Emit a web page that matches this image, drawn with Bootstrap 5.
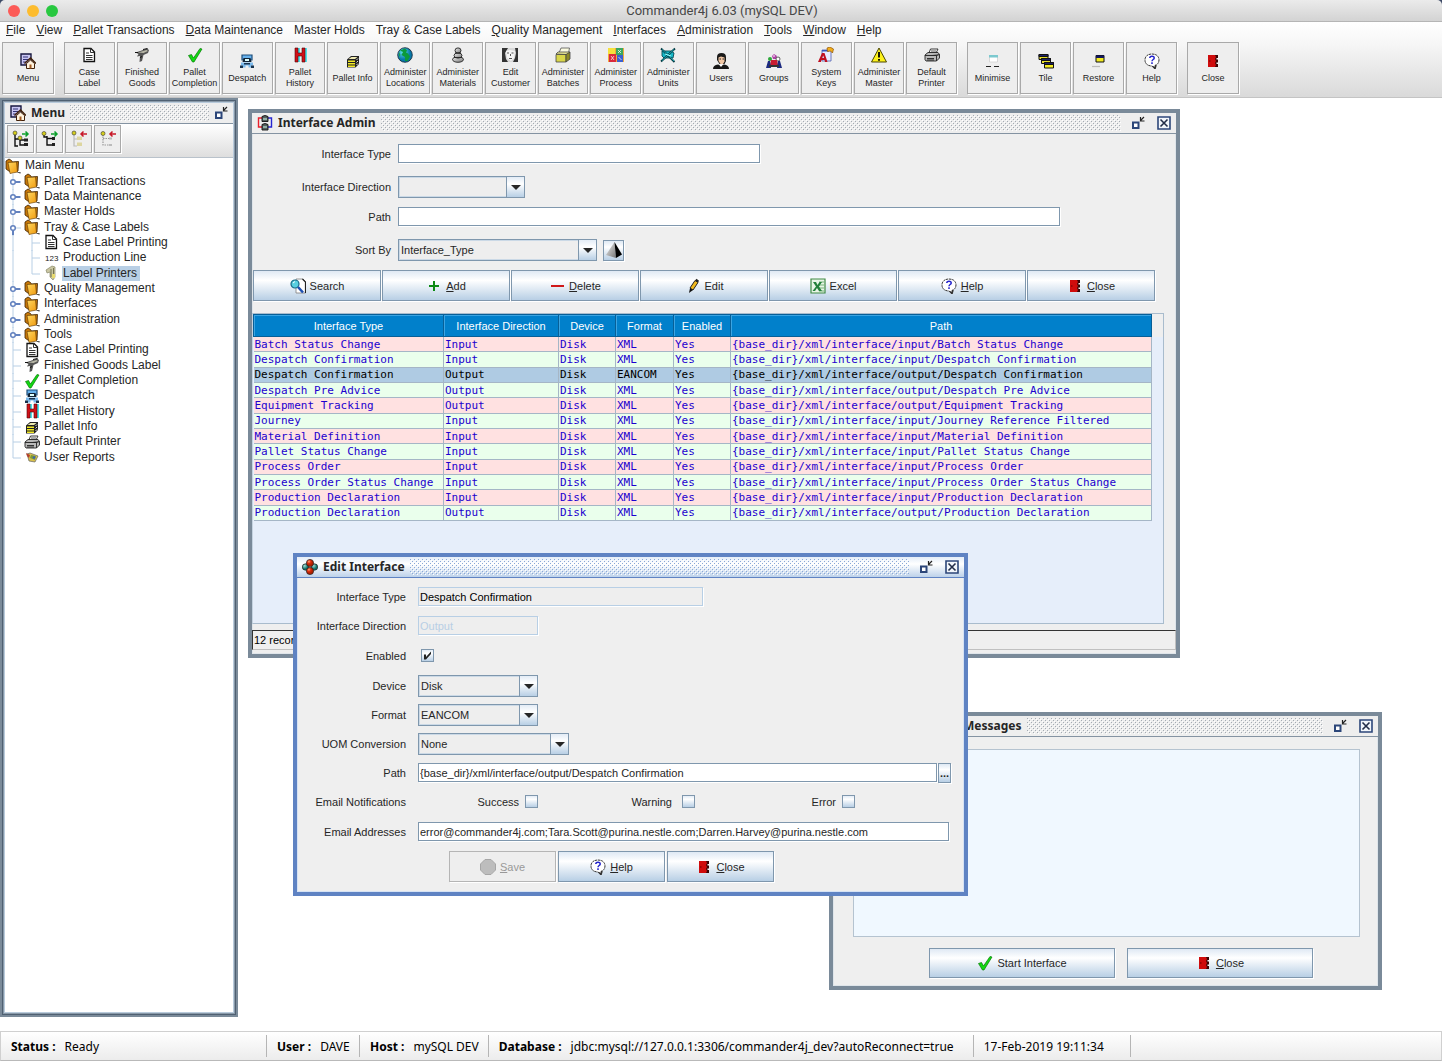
<!DOCTYPE html>
<html lang="en">
<head>
<meta charset="utf-8">
<meta name="viewport" content="width=device-width, initial-scale=1">
<title>Commander4j 6.03 (mySQL DEV)</title>
<link href="https://cdn.jsdelivr.net/npm/bootstrap@5.3.0/dist/css/bootstrap.min.css" rel="stylesheet">
<script src="https://cdn.jsdelivr.net/npm/bootstrap@5.3.0/dist/js/bootstrap.bundle.min.js"></script>
<style>
:root{--ui:"Liberation Sans",Arial,sans-serif;--lucida:"Noto Sans","Open Sans",sans-serif;--frame:#7a8a99;--active:#5f83c3;--steel:#7f97ad}
body{font-family:var(--ui);font-size:11px;line-height:14px;color:#262626;background:#fff}
svg{flex:none;display:block}
.ic{width:16px;height:16px}
/* application chrome */
.app-title{height:22px;background:linear-gradient(#ebebeb,#d3d3d3);border-bottom:1px solid #b5b5b5;font:13px/22px Roboto,sans-serif;color:#474747;padding:0 8px;border-radius:5px 5px 0 0}
.lights{gap:7px}
.light{width:12px;height:12px;border-radius:50%}
.l-red{background:#fc5b57}.l-amber{background:#fdbc2e}.l-green{background:#28c840}
.app-top{background:#3d4a66}
.app-head{background:linear-gradient(#fff,#f6f6f6 30%,#d9d9d9)}
.app-menu{height:18px;font-size:12px;line-height:17px;padding-left:1px}
.app-menu a{color:#262626;text-decoration:none;padding:0 6px 0 5px}
.tools{padding:2px 2px 3px;gap:10px;border-bottom:1px solid #c4c4c4}
.tool-set{gap:2px}
.tool-btn{flex:1 1 0;min-width:0;width:51px;height:52px;padding:0;border:1px solid #a9a9a9;border-radius:0;background:#eee;box-shadow:1px 1px 0 #fff;font-size:9px;line-height:11px;color:#262626;white-space:nowrap}
.tool-btn .ic{margin-bottom:4px}
.set-main{width:893px}.set-win{width:210px}.set-one{width:52px}
.desktop{position:relative;min-height:932px}
/* internal frames */
.frame{position:absolute;border:4px solid var(--frame);background:#efefef;box-shadow:inset 0 0 0 1px #dfe5ea}
.frame-on{border-color:var(--active);box-shadow:inset 0 0 0 1px #d5e2f4}
.frame-menu{left:0;top:0;bottom:14px;width:238px;border:2px solid var(--frame);padding:3px;background:#fff;box-shadow:inset 0 0 0 1px #4f6072,inset 0 0 0 2px #8999a8,inset 0 0 0 3px #b9cbdc}
.frame-admin{left:248px;top:11px;width:932px;height:549px}
.frame-edit{left:293px;top:455px;width:675px;height:343px;z-index:2}
.frame-msg{left:829px;top:614px;width:553px;height:278px}
.caption{height:21px;padding:0 5px;gap:5px;background:#eee;border-bottom:1px solid #8493a2}
.frame-on .caption{background:linear-gradient(#e4edf8,#fff 35%,#bdd2ea);border-color:var(--active)}
.caption h2{font:bold 12px/20px var(--lucida);margin:0;color:#262626;white-space:nowrap}
.bumps{flex:1;height:16px;background:
 conic-gradient(from 270deg at 1px 1px,#a4abb3 90deg,transparent 0) 0 0/4px 4px,
 conic-gradient(from 270deg at 1px 1px,#a4abb3 90deg,transparent 0) 2px 2px/4px 4px,
 conic-gradient(from 270deg at 1px 1px,#fff 90deg,transparent 0) 1px 1px/4px 4px,
 conic-gradient(from 270deg at 1px 1px,#fff 90deg,transparent 0) 3px 3px/4px 4px}
.frame-on .bumps{background:
 conic-gradient(from 270deg at 1px 1px,#8aa8d6 90deg,transparent 0) 0 0/4px 4px,
 conic-gradient(from 270deg at 1px 1px,#8aa8d6 90deg,transparent 0) 2px 2px/4px 4px,
 conic-gradient(from 270deg at 1px 1px,#fff 90deg,transparent 0) 1px 1px/4px 4px,
 conic-gradient(from 270deg at 1px 1px,#fff 90deg,transparent 0) 3px 3px/4px 4px}
.cap-btn{border:0;background:none;padding:0}
.cap-gap{gap:12px;padding-left:5px}
.frame-msg h2{padding-left:101px}
/* menu tree */
.tree-tools{height:34px;padding:1px 2px;gap:2px;background:linear-gradient(#fff,#dedede);border-bottom:1px solid #b9c2cb}
.tree-btn{width:27px;height:28px;padding:0 0 0 4px;border:1px solid #a9a9a9;background:#eee;box-shadow:1px 1px 0 #fff}
.tree{display:grid;grid-auto-rows:minmax(0,1fr);height:307px;margin:0;padding:0;list-style:none;font-size:12px;color:#262626}
.tree li{display:flex;align-items:center;white-space:nowrap}
.tree .guide{width:19px;height:15px;overflow:visible}
.tree .ic{margin-right:3px}
.tree b{font-weight:400;padding:0 1px;line-height:15px}
.tree .sel{background:#b8cfe5;padding-right:3px}
/* form parts */
.lbl{text-align:right;white-space:nowrap;flex:none}
.frame-admin form{padding:1px 0 0 1px}
.frame-admin .lbl{width:138px;margin-right:7px}
.frame-edit .lbl{width:109px;margin-right:12px}
.box.form-control{height:19px;min-height:0;padding:0 1px;border:1px solid var(--steel);border-radius:0;background:#fff;font-size:11px;line-height:14px;color:#262626;box-shadow:1px 1px 0 #fff}
.box.form-control[readonly]{background:#eee;border-color:#b8cfe5;color:#000}
.box.form-control:disabled{background:#eee;border-color:#b8cfe5;color:#b8cfe5;opacity:1}
.combo{position:relative}
.combo select{width:100%;height:22px;padding:0 20px 0 2px;border:1px solid var(--steel);border-radius:0;appearance:none;background:#eee;font-size:11px;color:#262626;box-shadow:inset 0 0 0 1px #cbd9e6;display:block}
.combo svg{position:absolute;right:1px;top:1px;width:18px;height:20px;pointer-events:none;background:linear-gradient(#e3ecf6,#fff 35%,#b8cfe5);border-left:1px solid var(--steel)}
.w-127{width:127px}.w-199{width:199px}.w-120{width:120px}.w-151{width:151px}.w-285{width:285px}.w-362{width:362px}.w-662{width:662px}.w-519{width:519px}.w-531{width:531px}
.lift{margin-top:9px}.drop{margin-top:13px}
.metal{height:31px;padding:0;border:1px solid var(--steel);border-radius:0;background:linear-gradient(#dfe9f4,#fff 32%,#b8cfe5);box-shadow:1px 1px 0 #fff;font-size:11px;line-height:14px;color:#262626;display:flex;align-items:center;justify-content:center;gap:4px}
.metal:disabled{background:#eee;border-color:#b5b5b5;color:#999}
.sq{width:21px;height:21px;margin-left:6px}
.dots{width:13px;height:20px;margin-left:1px;font-weight:bold}
.bar{gap:1px;margin-top:9px}
.bar .metal{width:128px}
.pane{margin:12px 12px 0 0;height:311px;border:1px solid #a9bccd;border-left-color:#c5d3e0;background:#e6eefa}
.pane-head{background:#efefef;height:23px}
.grid{width:899px;height:207px;table-layout:fixed;border-collapse:collapse;font:11px/13px "DejaVu Sans Mono",monospace;color:#1c00cf;margin-top:-23px}
.grid th{height:22px;background:#0180cb;color:#fff;font:11px/20px var(--ui);text-align:center;border:1px solid #075f97;box-shadow:inset 1px 1px 0 #3ba4e2;padding:0}
.grid td{padding:0 1px;border-right:1px solid #a5b6c6;border-bottom:1px solid #a5b6c6;white-space:nowrap;overflow:hidden;line-height:13px}
.grid tbody tr:nth-child(odd){background:#ffe1e1}
.grid tbody tr:nth-child(even){background:#eaffec}
.grid tbody tr.chosen{background:#afcbe3;color:#000}
.records{margin-top:6px;height:20px;border:1px solid #c0c0c0;border-top-color:#333;border-left-color:#333;padding:2px 1px;color:#000}
.line{min-height:29px}
.line-tall{min-height:31px}
.tick{appearance:none;width:13px;height:13px;margin:0;border:1px solid var(--steel);background:linear-gradient(#e3ecf6,#fff 30%,#b8cfe5)}
.tick-wrap{position:relative;margin-left:3px}
.tick-wrap svg{position:absolute;left:2px;top:2px;width:9px;height:9px;pointer-events:none}
.tick-wrap input{display:block}
.note{text-align:right;margin-right:6px}
.note-ok{width:101px}.note-warn{width:134px;margin-right:10px}.note-err{width:141px}
.edit-bar{gap:2px;margin:4px 0 0 152px}
.edit-bar .metal{width:107px}
.log-wrap{padding:12px 18px 0 20px}
.log.form-control{height:188px;border:1px solid #b5c3d0;border-radius:0;background:#f0f8ff;resize:none;display:block}
.msg-bar{gap:12px;margin:11px 0 0 96px}
.msg-bar .metal{width:186px;height:30px}
/* status bar */
.statusbar{height:30px;background:linear-gradient(#fff,#ececec);border:1px solid #d0d0d0;border-bottom-color:#b9b9b9;margin-bottom:2px;font:12px/24px var(--lucida);color:#000;white-space:nowrap}
.cell{border-right:1px solid #b5b5b5;height:22px;padding:0 9px 0 10px;gap:9px}
.cell-first{width:266px}.cell-user{min-width:93px}.cell-host{min-width:128px}.cell-db{min-width:485px}.cell-date{min-width:157px}
</style>
</head>
<body class="d-flex flex-column min-vh-100">
<svg width="0" height="0" class="position-absolute" aria-hidden="true">
<defs>
<linearGradient id="gold" x1="0" y1="0" x2="1" y2="1"><stop offset="0" stop-color="#ffd860"/><stop offset="1" stop-color="#f09a10"/></linearGradient>
<linearGradient id="grey" x1="0" y1="0" x2="1" y2="1"><stop offset="0" stop-color="#eee"/><stop offset="1" stop-color="#777"/></linearGradient>
<radialGradient id="sea" cx=".35" cy=".3"><stop offset="0" stop-color="#5fe0f0"/><stop offset="1" stop-color="#0878a8"/></radialGradient>
<radialGradient id="ballr" cx=".35" cy=".3"><stop offset="0" stop-color="#ffb080"/><stop offset=".5" stop-color="#e03010"/><stop offset="1" stop-color="#b02000"/></radialGradient>
<radialGradient id="ballt" cx=".35" cy=".3"><stop offset="0" stop-color="#a0e0d8"/><stop offset="1" stop-color="#107068"/></radialGradient>
<symbol id="home" viewBox="0 0 16 16"><path d="M1 1h10v11H1z" fill="#c9c6f2" stroke="#171740" stroke-width="1.4"/><path d="M3 4h5M3 6.500h5M3 9h3" stroke="#333377"/><path d="M4.500 10.500 10.500 5l5.500 5.500" fill="none" stroke="#40200a" stroke-width="1.500"/><path d="M6.500 10.500 10.500 7l4 3.500v5h-8z" fill="#fff3df" stroke="#40200a"/><path d="M9.500 11.500h2v4h-2z" fill="#a35a22"/></symbol>
<symbol id="doc" viewBox="0 0 16 16"><path d="M3 1.500h7l3.500 3.500v9.500H3z" fill="#fff" stroke="#111" stroke-width="1.300"/><path d="M9.500 1.500v4h4M5 6h3M5 8.500h6.500M5 10.500h6.500M5 12.500h6.500" fill="none" stroke="#333"/></symbol>
<symbol id="gun" viewBox="0 0 16 16"><path d="M1.500 5.500 9 3l4-1.500 2 1.500-1 3-4.500 2L8 14l-2.500 1L6 9 3 9.500 4.500 7z" fill="#555"/><path d="M4 5.500 12.500 3 14 4 9.500 6z" fill="#b9b9a8"/><path d="M1 5.500h3M6 10.500l2-1M9 2.500l4.500-1" stroke="#111"/></symbol>
<symbol id="check" viewBox="0 0 16 16"><path d="M1.500 8.500 4.500 7.500 6.500 11 13 1.500 15 2 7 15H5.500z" fill="#12d912" stroke="#067806" stroke-width=".7"/></symbol>
<symbol id="truck" viewBox="0 0 16 16"><path d="M3 2h10v5H3z" fill="#67b2ee" stroke="#1d4c78" stroke-width="1.200"/><path d="M4.500 5h7l1 4h-9z" fill="#123"/><path d="M6 6h4v2H6z" fill="#dff"/><path d="M2 9.500h12v3h-2v2H9.500v-2h-3v2H4v-2H2z" fill="#7ab9ec"/><path d="M1 12.500h3V15H1zM12 12.500h3V15h-3zM5 10h6v1.500H5z" fill="#17334e"/></symbol>
<symbol id="hist" viewBox="0 0 16 16"><path d="M5 1h3v5h3V1h4v14h-4V9H8v6H5z" fill="#50e0e8"/><path d="M3 1h3v5h4V1h3v14h-3V9H6v6H3z" fill="#d01018" stroke="#4c0508" stroke-width=".6"/></symbol>
<symbol id="stack" viewBox="0 0 16 16"><path d="M2 6.500 6 3h8v8l-3.500 3.500H2z" fill="#222"/><path d="M3.500 6 6.500 4h6l-2.500 2z" fill="#eee9b0"/><path d="M3 7.500h7V9H3zM3 10h7v1.500H3zM3 12.500h7V14H3z" fill="#f2e926"/><path d="M11.500 7 13 5.500M11.500 9.500 13 8M11.500 12l1.500-1.500" stroke="#ddd"/></symbol>
<symbol id="globe" viewBox="0 0 16 16"><circle cx="8" cy="8" r="7.300" fill="url(#sea)" stroke="#123" stroke-width=".8"/><path d="M3 3.500 8 1.500l2 2-1 2 2 1 2 3-2.500 4.500L8 14V10L4.500 8 6 5z" fill="#0b9a3b"/><path d="M2 5l1.500 3L2 10z" fill="#1ba04a"/></symbol>
<symbol id="jar" viewBox="0 0 16 16"><g stroke="#222" stroke-width=".9"><ellipse cx="8" cy="12.500" rx="5.500" ry="2.800" fill="url(#grey)"/><ellipse cx="8" cy="8.500" rx="4" ry="2.600" fill="url(#grey)"/><ellipse cx="8" cy="3.500" rx="3" ry="2.600" fill="url(#grey)"/><path d="M5 6h6M4 10.500h8" fill="none"/></g></symbol>
<symbol id="face" viewBox="0 0 16 16"><path d="M0 1h16v14H0z" fill="#d9d9d9"/><path d="M0 1h6L3 6l1 6 2 3H0zM13 1h3v14h-5l2-4 1-5z" fill="#333"/><path d="M4 4l4-1 5 1-1 7-3 3-4-3z" fill="#f4f4f4"/><path d="M5 6h2M9.500 6h2M7 11.500h3M8.500 7v2" stroke="#555"/></symbol>
<symbol id="batch" viewBox="0 0 16 16"><path d="M4 6 6 1h8.500l-1 5z" fill="#fbfbe0" stroke="#555" stroke-width=".8"/><path d="M1 7 3 5h12l-2.500 2.500z" fill="#f1ef9a" stroke="#444" stroke-width=".8"/><path d="M1 7.500h10V15H1z" fill="#d9d64a" stroke="#444" stroke-width=".8"/><path d="M11 7.500 15 5v7l-4 3z" fill="#8d8a28" stroke="#444" stroke-width=".8"/></symbol>
<symbol id="blocks" viewBox="0 0 16 16"><path d="M0 1h16v14H0z" fill="#f3a93a"/><path d="M0 1h7v6H0z" fill="#f5e13c"/><path d="M8 1h7v7H8z" fill="#3aa860"/><path d="M1 7h7v8H1z" fill="#d8283c"/><path d="M9 8h6v7H9z" fill="#3a5fd0"/><path d="M10 3l3 3M13 3l-3 3M3 9l3 4M6 9l-3 4M10.500 10l3 3" stroke="#fff" stroke-opacity=".7"/></symbol>
<symbol id="units" viewBox="0 0 16 16"><path d="M2 4h9l3 2-1 5H4L2 9z" fill="#18b8c8" stroke="#054a52" stroke-width=".9"/><path d="M1 1.500 14.500 15M1 14.500 15 1.500" stroke="#053a42" stroke-width="1.800"/><path d="M2 2.500 14 14M2 13.500 14 2.500" stroke="#22c4d2" stroke-width=".8"/><path d="M5 7l6 2" stroke="#9ff"/></symbol>
<symbol id="user" viewBox="0 0 16 16"><path d="M4 4q0-4 4.500-4T13 4v4l-1.500 3h-5L4 7z" fill="#1a1a1a"/><path d="M5.500 4.500 8 3.500l3.500 1v4L10 11H7.500L5.500 8z" fill="#f2c7a4"/><path d="M0 16q0-4 5-4.500l3 1 3-1q5 .5 5 4.500z" fill="#161616"/><path d="M6 11.500l2 2.500 2-2.500z" fill="#fff"/><path d="M6.500 6h1.500M9.500 6H11" stroke="#222"/></symbol>
<symbol id="group" viewBox="0 0 16 16"><path d="M8 1l3 2-1 3H7L6 3z" fill="#b044a8"/><circle cx="4" cy="6" r="2" fill="#2ca83a"/><circle cx="12" cy="6" r="2" fill="#fff" stroke="#222" stroke-width=".7"/><path d="M5 7h6l1.500 7h-9z" fill="#c81c30"/><path d="M0 15l2-7h2l1 7zM16 15l-2-7h-2l-1 7z" fill="#1c2a80"/><path d="M3 12h10v2H3z" fill="#333"/><path d="M7 3h2" stroke="#fff"/></symbol>
<symbol id="keys" viewBox="0 0 16 16"><path d="M4 3h9v11H4z" fill="#e9ecff" stroke="#4a5cae" stroke-width=".8"/><path d="M4 3h7v1.500H4z" fill="#3656b8"/><path d="M0 15 4 6h2.500L9.500 15H7l-.5-2H3.500L3 15zM4 11h2l-.8-2.500z" fill="#c01020"/><path d="M9 1l3-1 3.500 2-1 4-2-2-3 .5z" fill="#f2ae1c" stroke="#8f5200" stroke-width=".7"/></symbol>
<symbol id="warn" viewBox="0 0 16 16"><path d="M8 1 15.500 15H.5z" fill="#fdf21c" stroke="#4a4600" stroke-width="1" stroke-linejoin="round"/><path d="M8 5v5.500M8 12v1.800" stroke="#000" stroke-width="1.800"/></symbol>
<symbol id="print" viewBox="0 0 16 16"><path d="M5 6 6.500 2H14l-2 4z" fill="#fff" stroke="#222" stroke-width=".9"/><path d="M1 8 4 5.500h10l1.500 2V11l-3 3H2l-1-1.500z" fill="#b9b9b9" stroke="#222" stroke-width=".9"/><path d="M1 8.500h11.500l3-1M12.500 8.500V14M3 11.500h7M3 13h7" stroke="#222" stroke-width=".9"/><path d="M7 4h5" stroke="#555"/></symbol>
<symbol id="mini" viewBox="0 0 16 16"><path d="M4.500 2.500h8V9h-8z" fill="#fff" stroke="#ccc" stroke-width=".7"/><path d="M4 2h9v2.500H4z" fill="#7cc9cf"/><path d="M1 13.500h5M9 13.500h5" stroke="#222" stroke-width="1.200"/></symbol>
<symbol id="tile" viewBox="0 0 16 16"><g stroke="#111" stroke-width="1"><path d="M1 1.500h9v5H1z" fill="#e8df2a"/><path d="M1 1.500h9v2H1z" fill="#1c2168"/><path d="M3.500 5.500h9v5h-9z" fill="#e8df2a"/><path d="M3.500 5.500h9v2h-9z" fill="#1c2168"/><path d="M6.500 9.500h9V15h-9z" fill="#f6ee20"/><path d="M6.500 9.500h9v2h-9z" fill="#1c2168"/></g></symbol>
<symbol id="rest" viewBox="0 0 16 16"><path d="M5 2.500h8V9H5z" fill="#f2ea20" stroke="#111"/><path d="M5 2.500h8V5H5z" fill="#14185c"/><path d="M1 13.500h8" stroke="#bbb" stroke-width="1.200"/></symbol>
<symbol id="help" viewBox="0 0 16 16"><path d="M8 1C12.500 1 15 3.500 15 7c0 2.500-1.500 4.500-4 5.500L11 15.500 8 13C3.500 13 1 10.500 1 7s2.500-6 7-6z" fill="#fff" stroke="#333" stroke-width="1" stroke-dasharray="2.500 .7"/><path d="M12 12l-1 3.500L9 13.500" fill="none" stroke="#333" stroke-width="1.600"/><path d="M5.800 5C5.800 2.600 10.200 2.600 10.200 4.900 10.200 6.600 8 6.400 8 8.300M8 9.300v1.600" fill="none" stroke="#2222cc" stroke-width="1.500"/></symbol>
<symbol id="door" viewBox="0 0 16 16"><path d="M3 2h9v12H3z" fill="#cf0c0c"/><path d="M10 2h3v12h-3l1-2-1-2 1-2-1-2 1-2z" fill="#3a0505"/><path d="M11.500 5h2v1.500h-2zM11.500 9.500h2V11h-2z" fill="#f5f5f5"/><path d="M4 7.500h1.500v1H4z" fill="#600"/></symbol>
<symbol id="find" viewBox="0 0 16 16"><path d="M6 1h7l2.500 2.500V15H6z" fill="#fff" stroke="#888" stroke-width=".9"/><path d="M12.500 1l3 3v11" fill="none" stroke="#222" stroke-width="1.200"/><circle cx="5" cy="6" r="4" fill="#58cfe0" stroke="#1a6a88" stroke-width="1.200"/><path d="M8 9l5 5.500" stroke="#1d4fb0" stroke-width="2.600"/><path d="M3 5l2-1.500" stroke="#fff"/></symbol>
<symbol id="plus" viewBox="0 0 16 16"><path d="M8 3v10M3 8h10" stroke="#0c8a14" stroke-width="2"/></symbol>
<symbol id="minus" viewBox="0 0 16 16"><path d="M2 8h13" stroke="#d01818" stroke-width="2"/></symbol>
<symbol id="pen" viewBox="0 0 16 16"><path d="M5 10 10 2.500l3 2L8 12z" fill="#f0b81c" stroke="#222" stroke-width="1"/><path d="M10 2.500 11.500.8l2.500 2-1 1.700z" fill="#222"/><path d="M5 10l3 2-4 3z" fill="#111"/></symbol>
<symbol id="excel" viewBox="0 0 16 16"><path d="M1 1h14v14H1z" fill="#e8f5e6" stroke="#3f8a45" stroke-width="1.200"/><path d="M9 4h5M9 7h5M9 10h5M9 13h5" stroke="#76b37a"/><path d="M3 4h3l1.500 3L9.500 4H12L9 8.500 12 13H9L7 10l-2 3H2.500L6 8.500z" fill="#23803a"/></symbol>
<symbol id="stop" viewBox="0 0 16 16"><path d="M5 .5h6L15.500 5v6L11 15.500H5L.5 11V5z" fill="#bdbdbd" stroke="#a6a6a6"/></symbol>
<symbol id="folder" viewBox="0 0 16 16"><path d="M1 3 4 1l2.500 1.500L7.500 4l6-.5L13 13l-8.500.5L1 11z" fill="#c87808" stroke="#3a2000" stroke-width=".8"/><path d="M3 4.500 11.500 4l1 10-7.500 1.500z" fill="url(#gold)" stroke="#5a3400" stroke-width=".6"/><path d="M12.500 14.500h2.500v1" fill="none" stroke="#555" stroke-width="1.200"/></symbol>
<symbol id="labelp" viewBox="0 0 16 16"><path d="M6 3l3-2 3 1v10l-2 3-3-3V7L4 8 3 5z" fill="#c9c6a2" stroke="#8a8868" stroke-width=".7"/><path d="M8 4v8M10.500 3v9" stroke="#777650"/><path d="M9 9h3v4H9z" fill="#e8da70"/></symbol>
<symbol id="report" viewBox="0 0 16 16"><path d="M3 5l3-1 8 3-3 6-6-1z" fill="#d9c04a" stroke="#666" stroke-width=".7"/><path d="M2 4l4 2-1 3-2-2z" fill="#b3402c"/><path d="M7 6l5 1-1 4-5-2z" fill="#7a9a3a"/><circle cx="10" cy="8.500" r="1.300" fill="#3d62b0"/></symbol>
<symbol id="iface" viewBox="0 0 16 16"><path d="M5 3H1.500v9H5" fill="none" stroke="#e8202c" stroke-width="1.400"/><path d="M11 3h3.500v9H11" fill="none" stroke="#2626d0" stroke-width="1.400"/><path d="M5 1.500Q8-.5 11 1.500V6.500H5zM5 9.500q3-2 6 0V15H5z" fill="#55605f" stroke="#111" stroke-width=".9"/><path d="M6 4h4M6 12h4" stroke="#cfe"/></symbol>
<symbol id="balls" viewBox="0 0 16 16"><g stroke="#222" stroke-width=".7"><circle cx="3.500" cy="8" r="3.200" fill="url(#ballt)"/><circle cx="12.500" cy="8" r="3.200" fill="url(#ballt)"/><circle cx="8" cy="4" r="3.600" fill="url(#ballr)"/><circle cx="8" cy="12" r="3.600" fill="url(#ballr)"/></g></symbol>
<symbol id="pyramid" viewBox="0 0 16 16"><path d="M8.500 0 10 16 0 13z" fill="url(#grey)"/><path d="M8.500 0 16 12.500 10 16z" fill="#000"/></symbol>
<symbol id="shrink" viewBox="0 0 14 14"><path d="M2 6.500h5.500V12H2z" fill="#fff" stroke="#2c4679" stroke-width="2"/><path d="M13 1 9.500 4.500M9.500 1v4h4" fill="none" stroke="#222" stroke-width="1.200"/></symbol>
<symbol id="cross" viewBox="0 0 14 14"><path d="M1 1h12v12H1z" fill="#f2f6fb" stroke="#2c4679" stroke-width="1.600"/><path d="M3.500 3.500l7 7M10.500 3.500l-7 7" stroke="#222d48" stroke-width="1.600"/></symbol>
<symbol id="tr-all" viewBox="0 0 18 18"><path d="M3 4v12h3M3 9h4M8 8v7h6M8 10h6" fill="none" stroke="#111" stroke-width="1.400"/><circle cx="3" cy="3" r="2" fill="#d6cf1c" stroke="#333" stroke-width=".6"/><circle cx="8" cy="8" r="2" fill="#d6cf1c" stroke="#333" stroke-width=".6"/><path d="M12 8.500h4v3h-4zM12 13h4v3h-4z" fill="#222"/><path d="M10 4h6M13.500 1.500 16 4l-2.500 2.500" fill="none" stroke="#0ca02c" stroke-width="1.500"/></symbol>
<symbol id="tr-one" viewBox="0 0 18 18"><path d="M3 4v3h3M6 6v9h6M6 8.500h6" fill="none" stroke="#111" stroke-width="1.400"/><circle cx="3" cy="3.500" r="2" fill="#d6cf1c" stroke="#333" stroke-width=".6"/><path d="M11 7h3v3h-3zM11 13h3v3h-3z" fill="#222"/><path d="M10 4h6M13.500 1.500 16 4l-2.500 2.500" fill="none" stroke="#0ca02c" stroke-width="1.500"/></symbol>
<symbol id="tc-all" viewBox="0 0 18 18"><path d="M4 4v12h3M4 9h3" fill="none" stroke="#bbb" stroke-width="1.200"/><circle cx="4" cy="3" r="2" fill="#d6cf1c" stroke="#333" stroke-width=".6"/><path d="M7 6.500h5V10H7zM7 12.500h5V16H7z" fill="#ddd6a0"/><path d="M11 4h6M13.500 1.500 11 4l2.500 2.500" fill="none" stroke="#c81828" stroke-width="1.500"/></symbol>
<symbol id="tc-one" viewBox="0 0 18 18"><path d="M4 4v11h8M4 8.500h8" fill="none" stroke="#999" stroke-width="1.200" stroke-dasharray="1.500 1"/><circle cx="4" cy="3.500" r="2" fill="#d6cf1c" stroke="#333" stroke-width=".6"/><path d="M10 7.500h3v2h-3zM10 14h3v2h-3z" fill="#bbb"/><path d="M11 4h6M13.500 1.500 11 4l2.500 2.500" fill="none" stroke="#c81828" stroke-width="1.500"/></symbol>
<g id="g-shut"><path d="M8 0v16" stroke="#b8cfe5"/><path d="M9 8h6.500" stroke="#6382bf" stroke-width="2"/><circle cx="8" cy="8" r="2.300" fill="#fff" stroke="#6382bf" stroke-width="1.500"/></g>
<g id="g-open"><path d="M8 0v16M10 8h6" stroke="#b8cfe5"/><path d="M8 9v6" stroke="#6382bf" stroke-width="2"/><circle cx="8" cy="8" r="2.300" fill="#fff" stroke="#6382bf" stroke-width="1.500"/></g>
<g id="g-leaf"><path d="M8 0v16M8 8h8" stroke="#b8cfe5"/></g>
<g id="g-bar"><path d="M8 0v16" stroke="#b8cfe5"/></g>
<g id="g-end"><path d="M8 0v8h8" fill="none" stroke="#b8cfe5"/></g>
<g id="arrow"><path d="M4 8h10L9 13z" fill="#262626"/></g>
</defs>
</svg>

<header>
<div class="app-top"><div class="app-title d-flex align-items-center">
 <div class="lights d-flex"><span class="light l-red"></span><span class="light l-amber"></span><span class="light l-green"></span></div>
 <div class="flex-fill text-center pe-5">Commander4j 6.03 (mySQL DEV)</div>
</div></div>
<div class="app-head">
<nav class="app-menu d-flex">
 <a href="#"><u>F</u>ile</a><a href="#"><u>V</u>iew</a><a href="#"><u>P</u>allet Transactions</a><a href="#"><u>D</u>ata Maintenance</a><a href="#">Master Holds</a><a href="#">Tray &amp; Case Labels</a><a href="#"><u>Q</u>uality Management</a><a href="#"><u>I</u>nterfaces</a><a href="#"><u>A</u>dministration</a><a href="#"><u>T</u>ools</a><a href="#"><u>W</u>indow</a><a href="#"><u>H</u>elp</a>
</nav>
<div class="tools d-flex">
 <div class="tool-set set-one d-flex"><button class="tool-btn d-flex flex-column align-items-center justify-content-center"><svg class="ic"><use href="#home"/></svg>Menu</button></div>
 <div class="tool-set set-main d-flex">
 <button class="tool-btn d-flex flex-column align-items-center justify-content-center"><svg class="ic"><use href="#doc"/></svg><span>Case<br>Label</span></button>
 <button class="tool-btn d-flex flex-column align-items-center justify-content-center"><svg class="ic"><use href="#gun"/></svg><span>Finished<br>Goods</span></button>
 <button class="tool-btn d-flex flex-column align-items-center justify-content-center"><svg class="ic"><use href="#check"/></svg><span>Pallet<br>Completion</span></button>
 <button class="tool-btn d-flex flex-column align-items-center justify-content-center"><svg class="ic"><use href="#truck"/></svg>Despatch</button>
 <button class="tool-btn d-flex flex-column align-items-center justify-content-center"><svg class="ic"><use href="#hist"/></svg><span>Pallet<br>History</span></button>
 <button class="tool-btn d-flex flex-column align-items-center justify-content-center"><svg class="ic"><use href="#stack"/></svg>Pallet Info</button>
 <button class="tool-btn d-flex flex-column align-items-center justify-content-center"><svg class="ic"><use href="#globe"/></svg><span>Administer<br>Locations</span></button>
 <button class="tool-btn d-flex flex-column align-items-center justify-content-center"><svg class="ic"><use href="#jar"/></svg><span>Administer<br>Materials</span></button>
 <button class="tool-btn d-flex flex-column align-items-center justify-content-center"><svg class="ic"><use href="#face"/></svg><span>Edit<br>Customer</span></button>
 <button class="tool-btn d-flex flex-column align-items-center justify-content-center"><svg class="ic"><use href="#batch"/></svg><span>Administer<br>Batches</span></button>
 <button class="tool-btn d-flex flex-column align-items-center justify-content-center"><svg class="ic"><use href="#blocks"/></svg><span>Administer<br>Process</span></button>
 <button class="tool-btn d-flex flex-column align-items-center justify-content-center"><svg class="ic"><use href="#units"/></svg><span>Administer<br>Units</span></button>
 <button class="tool-btn d-flex flex-column align-items-center justify-content-center"><svg class="ic"><use href="#user"/></svg>Users</button>
 <button class="tool-btn d-flex flex-column align-items-center justify-content-center"><svg class="ic"><use href="#group"/></svg>Groups</button>
 <button class="tool-btn d-flex flex-column align-items-center justify-content-center"><svg class="ic"><use href="#keys"/></svg><span>System<br>Keys</span></button>
 <button class="tool-btn d-flex flex-column align-items-center justify-content-center"><svg class="ic"><use href="#warn"/></svg><span>Administer<br>Master</span></button>
 <button class="tool-btn d-flex flex-column align-items-center justify-content-center"><svg class="ic"><use href="#print"/></svg><span>Default<br>Printer</span></button>
 </div>
 <div class="tool-set set-win d-flex">
 <button class="tool-btn d-flex flex-column align-items-center justify-content-center"><svg class="ic"><use href="#mini"/></svg>Minimise</button>
 <button class="tool-btn d-flex flex-column align-items-center justify-content-center"><svg class="ic"><use href="#tile"/></svg>Tile</button>
 <button class="tool-btn d-flex flex-column align-items-center justify-content-center"><svg class="ic"><use href="#rest"/></svg>Restore</button>
 <button class="tool-btn d-flex flex-column align-items-center justify-content-center"><svg class="ic"><use href="#help"/></svg>Help</button>
 </div>
 <div class="tool-set set-one d-flex"><button class="tool-btn d-flex flex-column align-items-center justify-content-center"><svg class="ic"><use href="#door"/></svg>Close</button></div>
</div>
</div>
</header>

<main class="desktop flex-grow-1">

<section class="frame frame-menu d-flex flex-column">
 <div class="caption d-flex align-items-center"><svg class="ic"><use href="#home"/></svg><h2>Menu</h2><div class="bumps"></div><button class="cap-btn" aria-label="Restore menu"><svg width="14" height="14"><use href="#shrink"/></svg></button></div>
 <div class="tree-tools d-flex">
  <button class="tree-btn" aria-label="Expand all"><svg width="18" height="18"><use href="#tr-all"/></svg></button>
  <button class="tree-btn" aria-label="Expand"><svg width="18" height="18"><use href="#tr-one"/></svg></button>
  <button class="tree-btn" aria-label="Collapse all"><svg width="18" height="18"><use href="#tc-all"/></svg></button>
  <button class="tree-btn" aria-label="Collapse"><svg width="18" height="18"><use href="#tc-one"/></svg></button>
 </div>
 <ul class="tree">
  <li><svg class="ic"><use href="#folder"/></svg><b>Main Menu</b></li>
  <li><svg class="guide"><use href="#g-shut"/></svg><svg class="ic"><use href="#folder"/></svg><b>Pallet Transactions</b></li>
  <li><svg class="guide"><use href="#g-shut"/></svg><svg class="ic"><use href="#folder"/></svg><b>Data Maintenance</b></li>
  <li><svg class="guide"><use href="#g-shut"/></svg><svg class="ic"><use href="#folder"/></svg><b>Master Holds</b></li>
  <li><svg class="guide"><use href="#g-open"/></svg><svg class="ic"><use href="#folder"/></svg><b>Tray &amp; Case Labels</b></li>
  <li><svg class="guide"><use href="#g-bar"/></svg><svg class="guide"><use href="#g-leaf"/></svg><svg class="ic"><use href="#doc"/></svg><b>Case Label Printing</b></li>
  <li><svg class="guide"><use href="#g-bar"/></svg><svg class="guide"><use href="#g-leaf"/></svg><svg class="ic" viewBox="0 0 16 16"><text x="2" y="11" font-size="8" fill="#222">123</text></svg><b>Production Line</b></li>
  <li><svg class="guide"><use href="#g-bar"/></svg><svg class="guide"><use href="#g-end"/></svg><svg class="ic"><use href="#labelp"/></svg><b class="sel">Label Printers</b></li>
  <li><svg class="guide"><use href="#g-shut"/></svg><svg class="ic"><use href="#folder"/></svg><b>Quality Management</b></li>
  <li><svg class="guide"><use href="#g-shut"/></svg><svg class="ic"><use href="#folder"/></svg><b>Interfaces</b></li>
  <li><svg class="guide"><use href="#g-shut"/></svg><svg class="ic"><use href="#folder"/></svg><b>Administration</b></li>
  <li><svg class="guide"><use href="#g-shut"/></svg><svg class="ic"><use href="#folder"/></svg><b>Tools</b></li>
  <li><svg class="guide"><use href="#g-leaf"/></svg><svg class="ic"><use href="#doc"/></svg><b>Case Label Printing</b></li>
  <li><svg class="guide"><use href="#g-leaf"/></svg><svg class="ic"><use href="#gun"/></svg><b>Finished Goods Label</b></li>
  <li><svg class="guide"><use href="#g-leaf"/></svg><svg class="ic"><use href="#check"/></svg><b>Pallet Completion</b></li>
  <li><svg class="guide"><use href="#g-leaf"/></svg><svg class="ic"><use href="#truck"/></svg><b>Despatch</b></li>
  <li><svg class="guide"><use href="#g-leaf"/></svg><svg class="ic"><use href="#hist"/></svg><b>Pallet History</b></li>
  <li><svg class="guide"><use href="#g-leaf"/></svg><svg class="ic"><use href="#stack"/></svg><b>Pallet Info</b></li>
  <li><svg class="guide"><use href="#g-leaf"/></svg><svg class="ic"><use href="#print"/></svg><b>Default Printer</b></li>
  <li><svg class="guide"><use href="#g-end"/></svg><svg class="ic"><use href="#report"/></svg><b>User Reports</b></li>
 </ul>
</section>

<section class="frame frame-admin">
 <div class="caption d-flex align-items-center"><svg class="ic"><use href="#iface"/></svg><h2>Interface Admin</h2><div class="bumps"></div><div class="cap-gap d-flex"><button class="cap-btn" aria-label="Restore"><svg width="14" height="14"><use href="#shrink"/></svg></button><button class="cap-btn" aria-label="Close window"><svg width="14" height="14"><use href="#cross"/></svg></button></div></div>
 <form>
  <div class="d-flex align-items-center lift"><label class="lbl" for="f-type">Interface Type</label><input id="f-type" class="form-control box w-362"></div>
  <div class="d-flex align-items-center drop"><label class="lbl" for="f-dir">Interface Direction</label><div class="combo w-127"><select id="f-dir"><option></option></select><svg><use href="#arrow"/></svg></div></div>
  <div class="d-flex align-items-center lift"><label class="lbl" for="f-path">Path</label><input id="f-path" class="form-control box w-662"></div>
  <div class="d-flex align-items-center drop"><label class="lbl" for="f-sort">Sort By</label><div class="combo w-199"><select id="f-sort"><option>Interface_Type</option></select><svg><use href="#arrow"/></svg></div><button type="button" class="metal sq" aria-label="Sort order"><svg class="ic"><use href="#pyramid"/></svg></button></div>
  <div class="bar d-flex">
   <button type="button" class="metal"><svg class="ic"><use href="#find"/></svg>Search</button>
   <button type="button" class="metal"><svg class="ic"><use href="#plus"/></svg><span><u>A</u>dd</span></button>
   <button type="button" class="metal"><svg class="ic"><use href="#minus"/></svg><span><u>D</u>elete</span></button>
   <button type="button" class="metal"><svg class="ic"><use href="#pen"/></svg>Edit</button>
   <button type="button" class="metal"><svg class="ic"><use href="#excel"/></svg>Excel</button>
   <button type="button" class="metal"><svg class="ic"><use href="#help"/></svg><span><u>H</u>elp</span></button>
   <button type="button" class="metal"><svg class="ic"><use href="#door"/></svg><span><u>C</u>lose</span></button>
  </div>
 </form>
 <div class="pane"><div class="pane-head"></div>
  <table class="grid">
   <colgroup><col style="width:190px"><col style="width:115px"><col style="width:57px"><col style="width:58px"><col style="width:57px"><col></colgroup>
   <thead><tr><th>Interface Type</th><th>Interface Direction</th><th>Device</th><th>Format</th><th>Enabled</th><th>Path</th></tr></thead>
   <tbody>
   <tr><td>Batch Status Change</td><td>Input</td><td>Disk</td><td>XML</td><td>Yes</td><td>{base_dir}/xml/interface/input/Batch Status Change</td></tr>
   <tr><td>Despatch Confirmation</td><td>Input</td><td>Disk</td><td>XML</td><td>Yes</td><td>{base_dir}/xml/interface/input/Despatch Confirmation</td></tr>
   <tr class="chosen"><td>Despatch Confirmation</td><td>Output</td><td>Disk</td><td>EANCOM</td><td>Yes</td><td>{base_dir}/xml/interface/output/Despatch Confirmation</td></tr>
   <tr><td>Despatch Pre Advice</td><td>Output</td><td>Disk</td><td>XML</td><td>Yes</td><td>{base_dir}/xml/interface/output/Despatch Pre Advice</td></tr>
   <tr><td>Equipment Tracking</td><td>Output</td><td>Disk</td><td>XML</td><td>Yes</td><td>{base_dir}/xml/interface/output/Equipment Tracking</td></tr>
   <tr><td>Journey</td><td>Input</td><td>Disk</td><td>XML</td><td>Yes</td><td>{base_dir}/xml/interface/input/Journey Reference Filtered</td></tr>
   <tr><td>Material Definition</td><td>Input</td><td>Disk</td><td>XML</td><td>Yes</td><td>{base_dir}/xml/interface/input/Material Definition</td></tr>
   <tr><td>Pallet Status Change</td><td>Input</td><td>Disk</td><td>XML</td><td>Yes</td><td>{base_dir}/xml/interface/input/Pallet Status Change</td></tr>
   <tr><td>Process Order</td><td>Input</td><td>Disk</td><td>XML</td><td>Yes</td><td>{base_dir}/xml/interface/input/Process Order</td></tr>
   <tr><td>Process Order Status Change</td><td>Input</td><td>Disk</td><td>XML</td><td>Yes</td><td>{base_dir}/xml/interface/input/Process Order Status Change</td></tr>
   <tr><td>Production Declaration</td><td>Input</td><td>Disk</td><td>XML</td><td>Yes</td><td>{base_dir}/xml/interface/input/Production Declaration</td></tr>
   <tr><td>Production Declaration</td><td>Output</td><td>Disk</td><td>XML</td><td>Yes</td><td>{base_dir}/xml/interface/output/Production Declaration</td></tr>
   </tbody>
  </table>
 </div>
 <div class="records">12 recor</div>
</section>

<section class="frame frame-msg">
 <div class="caption d-flex align-items-center"><h2 class="ms-4">Messages</h2><div class="bumps"></div><div class="cap-gap d-flex"><button class="cap-btn" aria-label="Restore"><svg width="14" height="14"><use href="#shrink"/></svg></button><button class="cap-btn" aria-label="Close window"><svg width="14" height="14"><use href="#cross"/></svg></button></div></div>
 <div class="log-wrap"><textarea class="form-control log" aria-label="Messages" readonly></textarea></div>
 <div class="msg-bar d-flex"><button class="metal"><svg class="ic"><use href="#check"/></svg>Start Interface</button><button class="metal"><svg class="ic"><use href="#door"/></svg><span><u>C</u>lose</span></button></div>
</section>

<section class="frame frame-on frame-edit">
 <div class="caption d-flex align-items-center"><svg class="ic"><use href="#balls"/></svg><h2>Edit Interface</h2><div class="bumps"></div><div class="cap-gap d-flex"><button class="cap-btn" aria-label="Restore"><svg width="14" height="14"><use href="#shrink"/></svg></button><button class="cap-btn" aria-label="Close window"><svg width="14" height="14"><use href="#cross"/></svg></button></div></div>
 <form class="pt-1">
  <div class="line d-flex align-items-center"><label class="lbl" for="e-type">Interface Type</label><input id="e-type" class="form-control box w-285" readonly value="Despatch Confirmation"></div>
  <div class="line d-flex align-items-center"><label class="lbl" for="e-dir">Interface Direction</label><input id="e-dir" class="form-control box w-120" disabled value="Output"></div>
  <div class="line line-tall d-flex align-items-center"><label class="lbl" for="e-on">Enabled</label><div class="tick-wrap"><input id="e-on" class="tick" type="checkbox" checked><svg viewBox="0 0 9 9"><path d="M1 3.500h2V6l5-5.500v2.500L3 8.500H1z" fill="#222"/></svg></div></div>
  <div class="line d-flex align-items-center"><label class="lbl" for="e-dev">Device</label><div class="combo w-120"><select id="e-dev"><option>Disk</option></select><svg><use href="#arrow"/></svg></div></div>
  <div class="line d-flex align-items-center"><label class="lbl" for="e-fmt">Format</label><div class="combo w-120"><select id="e-fmt"><option>EANCOM</option></select><svg><use href="#arrow"/></svg></div></div>
  <div class="line d-flex align-items-center"><label class="lbl" for="e-uom">UOM Conversion</label><div class="combo w-151"><select id="e-uom"><option>None</option></select><svg><use href="#arrow"/></svg></div></div>
  <div class="line d-flex align-items-center"><label class="lbl" for="e-path">Path</label><input id="e-path" class="form-control box w-519" value="{base_dir}/xml/interface/output/Despatch Confirmation"><button type="button" class="metal dots">...</button></div>
  <div class="line d-flex align-items-center"><span class="lbl">Email Notifications</span>
   <label class="note note-ok" for="n-ok">Success</label><input id="n-ok" class="tick" type="checkbox">
   <label class="note note-warn" for="n-warn">Warning</label><input id="n-warn" class="tick" type="checkbox">
   <label class="note note-err" for="n-err">Error</label><input id="n-err" class="tick" type="checkbox"></div>
  <div class="line line-tall d-flex align-items-center"><label class="lbl" for="e-mail">Email Addresses</label><input id="e-mail" class="form-control box w-531" value="error@commander4j.com;Tara.Scott@purina.nestle.com;Darren.Harvey@purina.nestle.com"></div>
  <div class="edit-bar d-flex"><button type="button" class="metal" disabled><svg class="ic"><use href="#stop"/></svg><span><u>S</u>ave</span></button><button type="button" class="metal"><svg class="ic"><use href="#help"/></svg><span><u>H</u>elp</span></button><button type="button" class="metal"><svg class="ic"><use href="#door"/></svg><span><u>C</u>lose</span></button></div>
 </form>
</section>
</main>

<footer class="statusbar d-flex align-items-center">
 <div class="cell cell-first d-flex"><strong>Status :</strong><span>Ready</span></div>
 <div class="cell cell-user d-flex"><strong>User :</strong><span>DAVE</span></div>
 <div class="cell cell-host d-flex"><strong>Host :</strong><span>mySQL DEV</span></div>
 <div class="cell cell-db d-flex"><strong>Database :</strong><span>jdbc:mysql://127.0.0.1:3306/commander4j_dev?autoReconnect=true</span></div>
 <div class="cell cell-date d-flex"><span>17-Feb-2019 19:11:34</span></div>
</footer>
</body>
</html>
